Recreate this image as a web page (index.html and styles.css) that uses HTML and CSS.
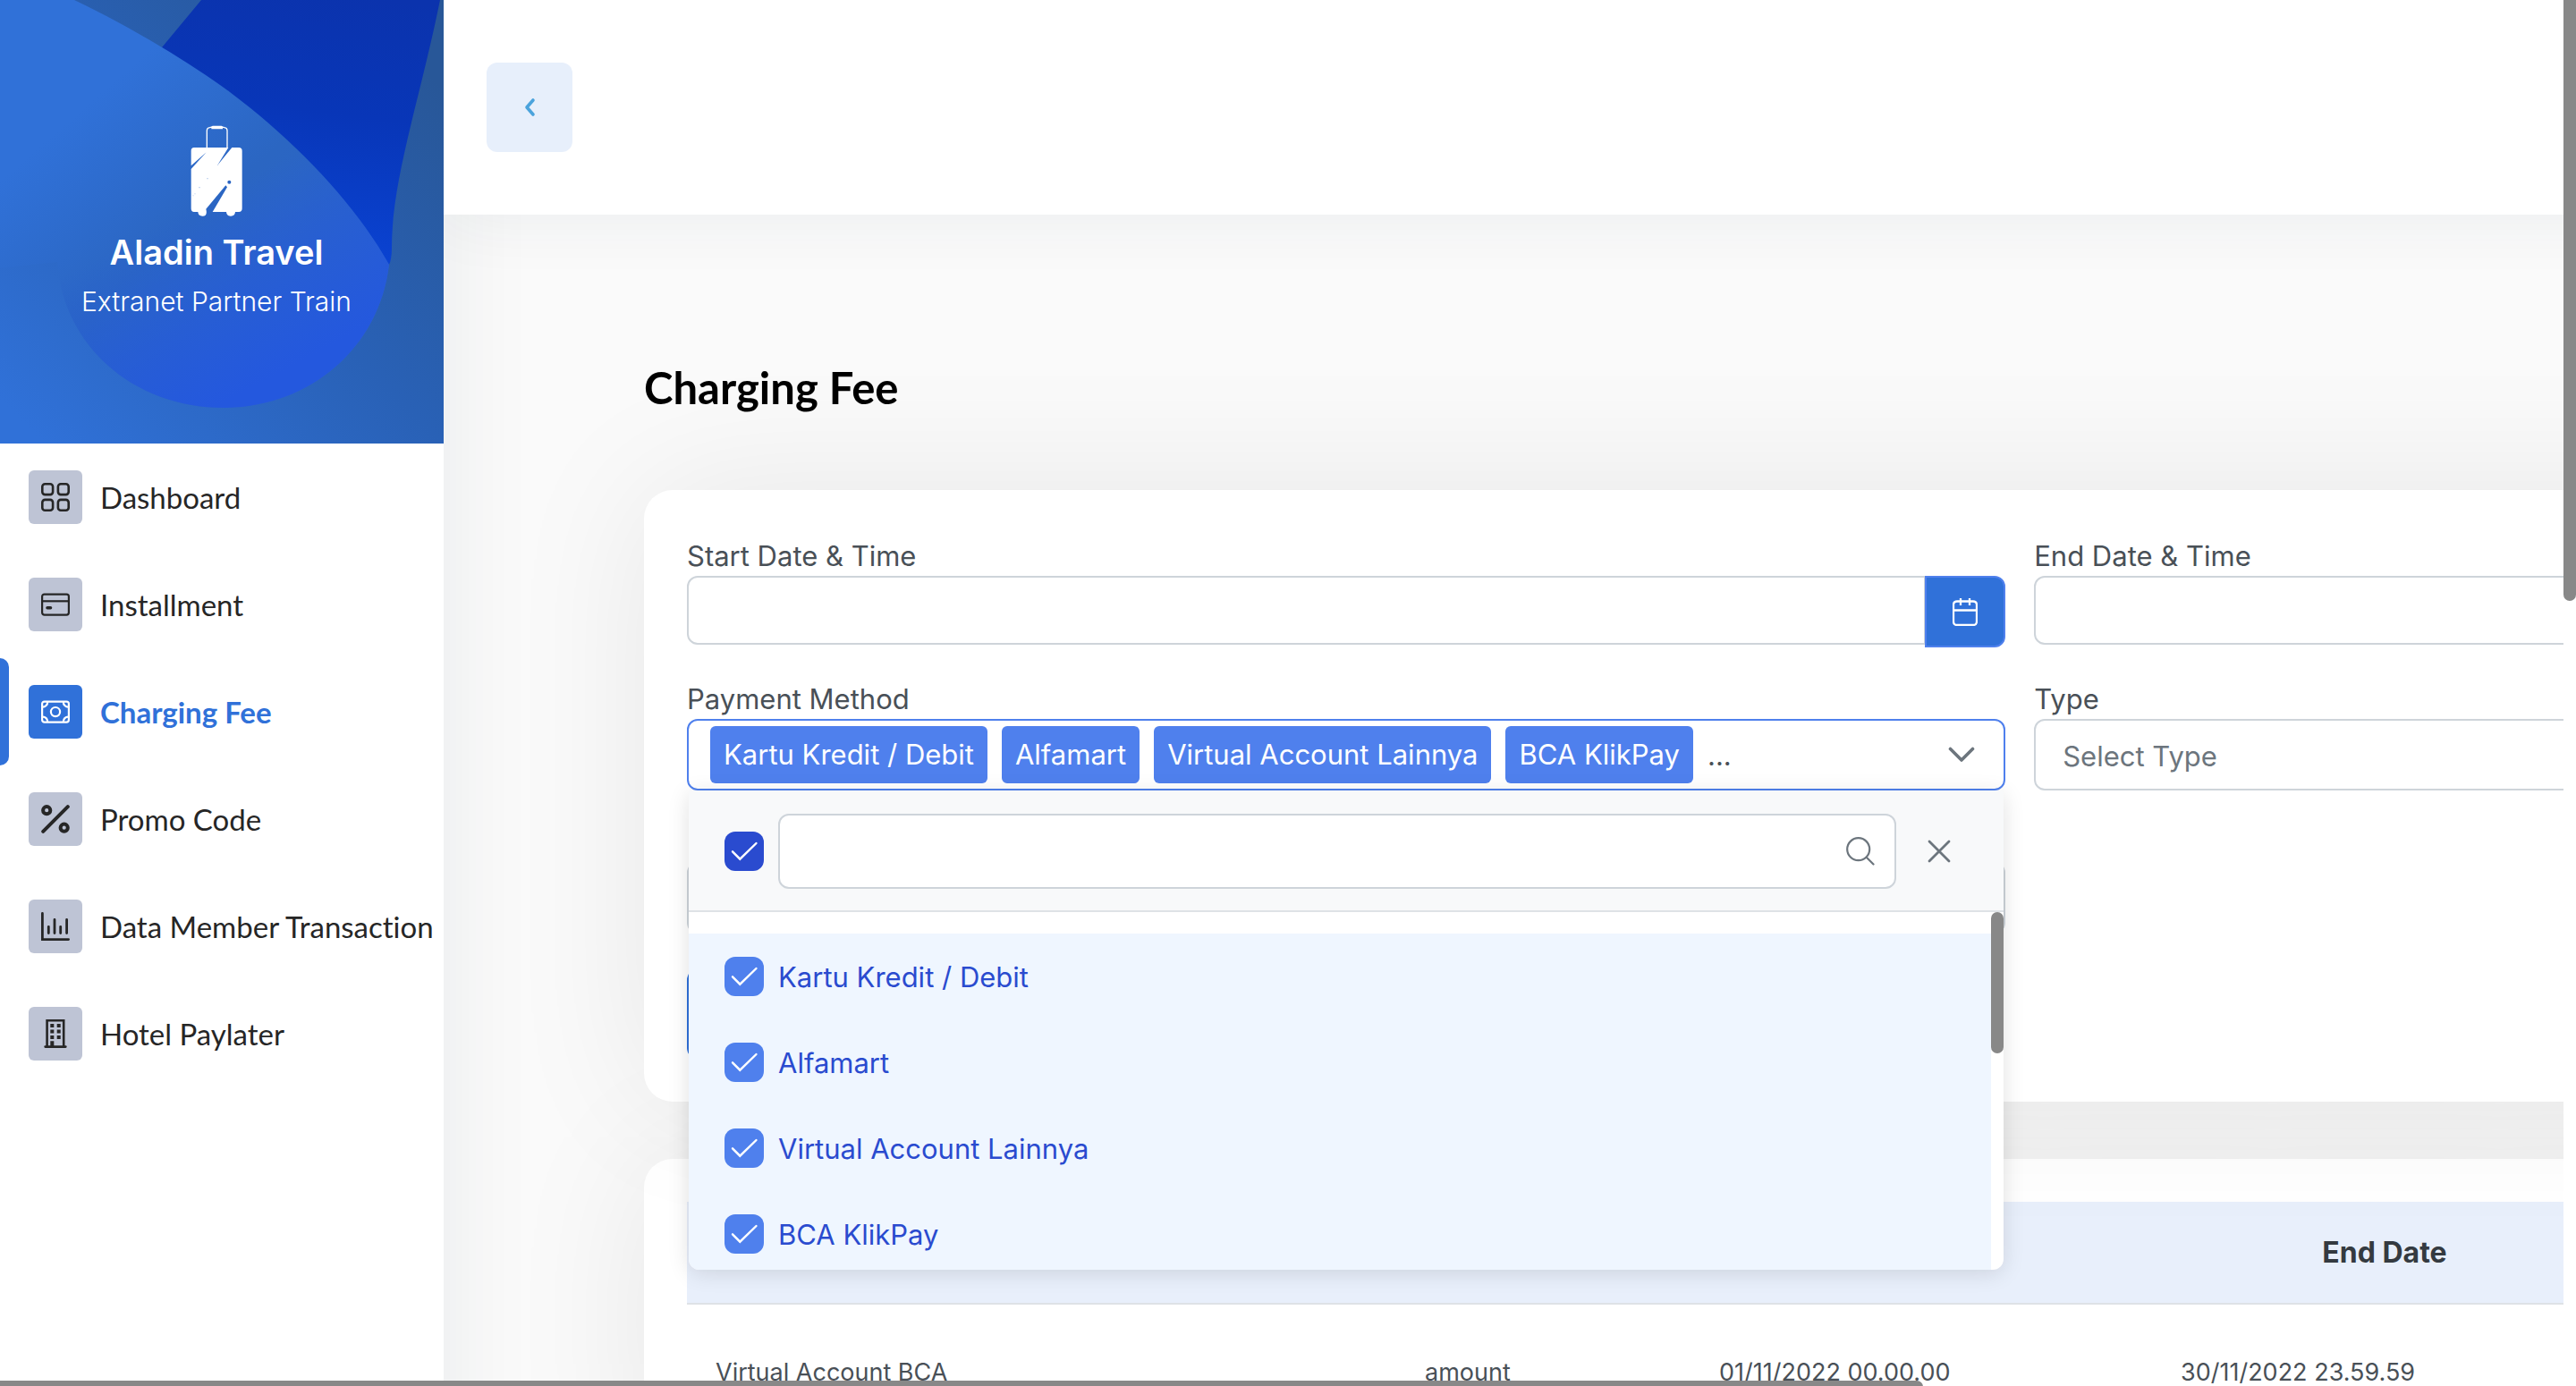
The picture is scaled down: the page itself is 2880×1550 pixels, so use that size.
FILE: index.html
```html
<!DOCTYPE html>
<html lang="id">
<head>
<meta charset="utf-8">
<title>Charging Fee - Aladin Travel</title>
<meta name="viewport" content="width=device-width, initial-scale=1">
<link rel="stylesheet" href="styles.css">
</head>
<body>
<svg class="sprite" aria-hidden="true">
  <symbol id="tick" viewBox="0 0 44 44"><path d="M9 22.300L17.300 30.700L35.500 13" fill="none" stroke="#fff" stroke-width="2.400" stroke-linecap="round"/></symbol>
</svg>
<div class="window">
  <div class="viewport">
    <div class="page">
      <aside class="sidebar">
        <div class="brand">
          <svg class="brand-art" viewBox="0 0 496 496" preserveAspectRatio="none" aria-hidden="true">
            <defs>
              <linearGradient id="base" x1="0" y1="1" x2="1" y2="0"><stop offset="0.05" stop-color="#3071d8"/><stop offset="0.5" stop-color="#2961b6"/><stop offset="0.900" stop-color="#285798"/></linearGradient>
              <linearGradient id="leaf" gradientUnits="userSpaceOnUse" x1="90" y1="60" x2="300" y2="300"><stop offset="0.150" stop-color="#3071d8"/><stop offset="0.700" stop-color="#2b66c2"/><stop offset="1" stop-color="#2b64c6"/></linearGradient>
              <linearGradient id="drop" gradientUnits="userSpaceOnUse" x1="180" y1="250" x2="290" y2="456"><stop offset="0" stop-color="#2458e0" stop-opacity="0"/><stop offset="0.900" stop-color="#2458de"/></linearGradient>
              <linearGradient id="deep" gradientUnits="userSpaceOnUse" x1="440" y1="0" x2="400" y2="296"><stop offset="0" stop-color="#0b33ad"/><stop offset="0.450" stop-color="#0836b8"/><stop offset="1" stop-color="#0a43d2"/></linearGradient>
            </defs>
            <rect width="496" height="496" fill="url(#base)"/>
            <path d="M225 0L181 53L300 200L435 296Q438 290 438 277C438 200 470 110 492 0Z" fill="url(#deep)"/>
            <path d="M0 0H83C150 32 215 72 257 103C330 158 395 225 435 296C424 390 345 456 250 456C148 456 70 385 64 293L0 300Z" fill="url(#leaf)"/>
            <path d="M64 293C70 385 148 456 250 456C345 456 424 390 435 296C395 225 330 158 257 103C170 150 64 200 64 293Z" fill="url(#drop)"/>
          </svg>
          <div class="brand-text">
            <svg class="suitcase" viewBox="400 32 174 306" aria-hidden="true">
              <path d="M455 108V50Q455 41 464 40L474 38H504L514 40Q523 41 523 50V108" fill="none" stroke="#fff" stroke-width="4"/>
              <path d="M474 34H504L508 37V45H470V37Z" fill="#fff"/>
              <path d="M412 107H527L490 167L539 107H562Q573 107 573 118V312Q573 323 562 323H550Q549 337 535 337Q521 337 520 323H474L523 240L518 234L452 313Q458 337 440 337Q426 337 425 323H412Q402 323 402 312V179L453 123L402 168V118Q402 107 412 107Z" fill="#fff"/>
              <circle cx="530" cy="223" r="6" fill="#2b65c2"/>
              <g fill="#9db9e6"><circle cx="457" cy="211" r="2"/><circle cx="430" cy="241" r="2"/><circle cx="415" cy="262" r="1.500"/><circle cx="409" cy="268" r="1.500"/></g>
            </svg>
            <strong class="brand-name">Aladin Travel</strong>
            <span class="brand-sub">Extranet Partner Train</span>
          </div>
        </div>
        <nav class="menu">
          <a class="menu-item" href="#dashboard"><span class="tile"><svg viewBox="0 0 32 32"><g fill="none" stroke="currentColor" stroke-width="2.600"><rect x="1.300" y="1.300" width="11.800" height="11.800" rx="3"/><rect x="18.900" y="1.300" width="11.800" height="11.800" rx="3"/><rect x="1.300" y="18.900" width="11.800" height="11.800" rx="3"/><rect x="18.900" y="18.900" width="11.800" height="11.800" rx="3"/></g></svg></span>Dashboard</a>
          <a class="menu-item" href="#installment"><span class="tile"><svg viewBox="0 0 32 32"><g fill="none" stroke="currentColor" stroke-width="2.200"><rect x="1.100" y="4.600" width="29.800" height="23" rx="2.500"/><path d="M1 12.300H31"/><path d="M7 19.700H10.500" stroke-width="3.600" stroke-linecap="round"/></g></svg></span>Installment</a>
          <a class="menu-item active" href="#charging-fee" aria-current="page"><span class="tile"><svg viewBox="0 0 32 32"><g fill="none" stroke="currentColor" stroke-width="2.200"><rect x="1.100" y="4.600" width="29.800" height="23" rx="2.500"/><circle cx="16" cy="16.100" r="5.100"/><path d="M7.200 5A5.400 5.400 0 0 1 1.500 10.600M24.800 5A5.400 5.400 0 0 0 30.500 10.600M7.200 27.200A5.400 5.400 0 0 0 1.500 21.600M24.800 27.200A5.400 5.400 0 0 1 30.500 21.600"/></g></svg></span>Charging Fee</a>
          <a class="menu-item" href="#promo-code"><span class="tile"><svg viewBox="0 0 32 32"><g fill="none" stroke="currentColor" stroke-width="4"><circle cx="6.200" cy="6.200" r="4.100"/><circle cx="25.700" cy="25.700" r="4.100"/><path d="M2.200 29.800L29.800 2.200" stroke-linecap="round"/></g></svg></span>Promo Code</a>
          <a class="menu-item" href="#data-member"><span class="tile"><svg viewBox="0 0 32 32"><path d="M1.400 1.400V30.600H30.600M8.300 16.300V23.600M15 8.500V23.600M21.700 16.300V23.600M28.600 8.500V23.600" fill="none" stroke="currentColor" stroke-width="2.800" stroke-linecap="round"/></svg></span>Data Member Transaction</a>
          <a class="menu-item" href="#hotel-paylater"><span class="tile"><svg viewBox="0 0 32 32"><path d="M6.600 30V1.300H25.200V30M4.600 30.600H27.400" fill="none" stroke="currentColor" stroke-width="2.600" stroke-linecap="round"/><path d="M10.300 5h4v4h-4zM17.700 5h4v4h-4zM10.300 11.500h4v4h-4zM17.700 11.500h4v4h-4zM10.300 18h4v4h-4zM17.700 18h4v4h-4zM10.300 24.300h4v6h-4z" fill="currentColor"/></svg></span>Hotel Paylater</a>
        </nav>
      </aside>

      <div class="workspace">
        <header class="topbar">
          <button class="collapse" type="button" aria-label="Collapse menu"><svg viewBox="0 0 14 22"><path d="M11 3L4 11L11 19" fill="none" stroke="currentColor" stroke-width="3.600" stroke-linecap="round" stroke-linejoin="round"/></svg></button>
        </header>
        <main class="content">
          <h1 class="title">Charging Fee</h1>

          <form class="card filters">
            <div class="field">
              <label for="start">Start Date &amp; Time</label>
              <div class="date-box">
                <input class="date-input" id="start" type="text">
                <button class="date-button" type="button" aria-label="Choose start date"><svg viewBox="0 0 28 32"><path d="M5 4.500H23Q27 4.500 27 8.500V27Q27 31 23 31H5Q1 31 1 27V8.500Q1 4.500 5 4.500ZM1 14.500H27M9 1V9M19 1V9" fill="none" stroke="currentColor" stroke-width="2.300"/></svg></button>
              </div>
            </div>
            <div class="field">
              <label for="end">End Date &amp; Time</label>
              <div class="date-box">
                <input class="date-input" id="end" type="text">
                <button class="date-button" type="button" aria-label="Choose end date"><svg viewBox="0 0 28 32"><path d="M5 4.500H23Q27 4.500 27 8.500V27Q27 31 23 31H5Q1 31 1 27V8.500Q1 4.500 5 4.500ZM1 14.500H27M9 1V9M19 1V9" fill="none" stroke="currentColor" stroke-width="2.300"/></svg></button>
              </div>
            </div>
            <div class="field">
              <span class="label" id="method-label">Payment Method</span>
              <div class="multi" role="group" aria-labelledby="method-label">
                <span class="tag">Kartu Kredit / Debit</span>
                <span class="tag">Alfamart</span>
                <span class="tag">Virtual Account Lainnya</span>
                <span class="tag">BCA KlikPay</span>
                <span class="more">...</span>
                <button class="toggle" type="button" aria-label="Close list" aria-expanded="true"><svg viewBox="0 0 30 18"><path d="M2.500 2.500L15 15L27.500 2.500" fill="none" stroke="currentColor" stroke-width="3.600" stroke-linecap="round" stroke-linejoin="round"/></svg></button>
                <div class="panel">
                  <div class="panel-head">
                    <span class="check all"><input type="checkbox" checked aria-label="Select all"><svg><use href="#tick"/></svg></span>
                    <div class="search">
                      <input type="text" aria-label="Search payment method">
                      <svg viewBox="0 0 32 32"><g fill="none" stroke="currentColor" stroke-width="2.200" stroke-linecap="round"><circle cx="13.700" cy="13.700" r="12.500"/><path d="M23 23L30.500 30.500"/></g></svg>
                    </div>
                    <button class="close" type="button" aria-label="Close"><svg viewBox="0 0 26 26"><path d="M2 2L24 24M24 2L2 24" stroke="currentColor" stroke-width="2.800" stroke-linecap="round"/></svg></button>
                  </div>
                  <div class="panel-body">
                    <div class="options">
                      <label class="option"><span class="check"><input type="checkbox" checked><svg><use href="#tick"/></svg></span><span class="option-text">Kartu Kredit / Debit</span></label>
                      <label class="option"><span class="check"><input type="checkbox" checked><svg><use href="#tick"/></svg></span><span class="option-text">Alfamart</span></label>
                      <label class="option"><span class="check"><input type="checkbox" checked><svg><use href="#tick"/></svg></span><span class="option-text">Virtual Account Lainnya</span></label>
                      <label class="option"><span class="check"><input type="checkbox" checked><svg><use href="#tick"/></svg></span><span class="option-text">BCA KlikPay</span></label>
                    </div>
                    <div class="options-track"><div class="options-thumb"></div></div>
                  </div>
                </div>
              </div>
            </div>
            <div class="field">
              <label for="type">Type</label>
              <select class="select" id="type"><option>Select Type</option></select>
            </div>
            <div class="actions">
              <input class="amount" type="text" aria-label="Amount">
              <button class="submit" type="submit" aria-label="Search"></button>
            </div>
          </form>

          <section class="card">
            <table class="table">
              <colgroup><col class="c-method"><col class="c-type"><col class="c-start"><col class="c-end"><col></colgroup>
              <thead><tr><th aria-label="Payment method"></th><th aria-label="Type"></th><th aria-label="Start date"></th><th>End Date</th><th aria-label="Action"></th></tr></thead>
              <tbody><tr><td>Virtual Account BCA</td><td>amount</td><td>01/11/2022 00.00.00</td><td>30/11/2022 23.59.59</td><td></td></tr></tbody>
            </table>
          </section>
        </main>
      </div>
    </div>
  </div>
  <div class="track-v"><div class="thumb-v"></div></div>
  <div class="track-h"><div class="thumb-h"></div></div>
</div>
</body>
</html>
```

FILE: styles.css
```css
* { box-sizing: border-box; }

body {
  margin: 0;
  background: #fff;
  color: #495057;
  font: 31px/48px Inter, "Liberation Sans", sans-serif;
}

button, input, select { font: inherit; color: inherit; margin: 0; }
button { cursor: pointer; padding: 0; border: 0; background: none; }
svg { display: block; }
.sprite { position: absolute; width: 0; height: 0; }

/* Scrolling window with slim custom bars */
.window {
  display: grid;
  grid-template-columns: minmax(0, 1fr) 14px;
  grid-template-rows: minmax(0, 1fr) 6px;
  height: 100vh;
  overflow: hidden;
}
.viewport {
  grid-row: 1 / 3;
  grid-column: 1;
  overflow: auto;
  scrollbar-width: none;
}
.thumb-v { height: 672px; background: #888; border-radius: 0 0 7px 7px; }
.track-v { grid-row: 1 / 3; grid-column: 2; }
.track-h { z-index: 4; grid-row: 2; grid-column: 1; overflow: hidden; }
.thumb-h { width: 75%; height: 14px; background: #888; border-radius: 0 7px 7px 0; }

.page {
  display: flex;
  width: 134%;
  min-height: 100%;
  background: #fafafa;
}

/* Sidebar */
.sidebar {
  position: relative;
  z-index: 1;
  flex: 0 0 496px;
  background: #fff;
  box-shadow: 0 0 100px rgba(30, 50, 70, 0.08);
}
.brand { display: grid; height: 496px; }
.brand-art, .brand-text { grid-area: 1 / 1; }
.brand-art { width: 100%; height: 100%; }
.brand-text {
  z-index: 1;
  display: flex;
  flex-direction: column;
  align-items: center;
  padding: 140px 12px 0 0;
  color: #fff;
}
.suitcase { width: 58px; height: 102px; }
.brand-name { margin-top: 16px; font-size: 38px; font-weight: 600; }
.brand-sub { margin-top: 7px; font-size: 30px; font-weight: 300; }

.menu-item {
  display: flex;
  align-items: center;
  gap: 20px;
  height: 120px;
  padding-left: 32px;
  color: #262626;
  font: 33px/44px Lato, "Open Sans", sans-serif;
  font-variant-ligatures: none;
  text-decoration: none;
  white-space: nowrap;
}
.tile {
  display: grid;
  place-items: center;
  width: 60px;
  height: 60px;
  border-radius: 6px;
  background: #bec4d5;
}
.tile svg { width: 32px; height: 32px; }
.active { position: relative; color: #3071d9; font-weight: 700; }
.active::before {
  content: "";
  position: absolute;
  inset: 0 auto 0 0;
  width: 10px;
  border-radius: 0 10px 10px 0;
  background: #3071d9;
}
.active .tile { background: #3071d9; color: #fff; }

/* Workspace */
.workspace { flex: 1; min-width: 0; }
.topbar {
  position: relative;
  z-index: 2;
  display: flex;
  align-items: center;
  height: 240px;
  padding-left: 48px;
  background: #fff;
  box-shadow: 0 0 80px rgba(30, 50, 70, 0.07);
  clip-path: inset(0 0 -120px 0);
}
.collapse {
  display: grid;
  place-items: center;
  width: 96px;
  height: 100px;
  border-radius: 12px;
  background: #e7effb;
  color: #4ba3dc;
}
.collapse svg { width: 14px; height: 22px; }
.content { padding: 160px 44px 48px 224px; }
.title {
  margin: 0 0 82px;
  color: #000;
  font: 700 49px/66px Lato, "Open Sans", sans-serif;
}

.card {
  padding: 48px;
  border-radius: 32px;
  background: #fff;
  box-shadow: 0 0 160px rgba(0, 0, 0, 0.08);
}
.card + .card { margin-top: 64px; }

/* Filter form */
.filters {
  position: relative;
  z-index: 1;
  display: grid;
  grid-template-columns: repeat(2, minmax(0, 1fr));
  gap: 32px;
}
.field > label, .label { display: block; padding-top: 4px; line-height: 44px; }
.date-box { display: flex; align-items: flex-start; height: 80px; }
.date-input, .amount, .search input, .select {
  border: 2px solid #ced4da;
  background: #fff;
  padding: 0 30px;
}
.date-input {
  flex: 1;
  min-width: 0;
  height: 77px;
  border-right-width: 1px;
  border-radius: 12px 0 0 12px;
}
.date-button {
  display: grid;
  place-items: center;
  width: 90px;
  height: 80px;
  border: 2px solid #4f80ed;
  border-radius: 0 12px 12px 0;
  background: #3071d9;
  color: #fff;
}
.date-button svg { width: 28px; height: 32px; }
.select {
  display: block;
  width: 100%;
  height: 80px;
  padding-top: 4px;
  border-radius: 12px;
  color: #6c757d;
  appearance: none;
}

.multi {
  position: relative;
  display: flex;
  align-items: center;
  gap: 16px;
  height: 80px;
  padding: 0 32px 0 24px;
  border: 2px solid #4f80ed;
  border-radius: 12px;
}
.tag {
  padding: 10px 15px;
  border-radius: 6px;
  background: #4f80ed;
  color: #fff;
  line-height: 44px;
  white-space: nowrap;
}
.more { padding-top: 2px; }
.toggle { margin-left: auto; color: #6c757d; }
.toggle svg { width: 30px; height: 18px; }

.panel {
  position: absolute;
  top: calc(100% + 2px);
  left: 0;
  right: 0;
  overflow: hidden;
  border-radius: 0 0 12px 12px;
  background: #fff;
  box-shadow: 0 4px 24px rgba(0, 0, 0, 0.12);
}
.multi:has(.panel) { z-index: 3; }
.panel-head {
  display: flex;
  align-items: center;
  gap: 16px;
  padding: 26px 40px 24px;
  border-bottom: 2px solid #dee2e6;
  background: #f8f9fa;
}
.check { display: grid; flex: none; }
.check > * { grid-area: 1 / 1; width: 44px; height: 44px; }
.check input {
  appearance: none;
  border-radius: 12px;
  background: #4f80ed;
}
.check svg { pointer-events: none; z-index: 1; }
.all input { background: #2a4bcf; }
.search { display: grid; flex: 1; align-items: center; }
.search > * { grid-area: 1 / 1; }
.search input { width: 100%; height: 84px; border-radius: 12px; }
.search svg {
  z-index: 1;
  justify-self: end;
  width: 32px;
  height: 32px;
  margin-right: 24px;
  color: #6c757d;
}
.close {
  display: grid;
  place-items: center;
  width: 64px;
  height: 64px;
  color: #6c757d;
}
.close svg { width: 26px; height: 26px; }
.panel-body {
  display: grid;
  grid-template-columns: minmax(0, 1fr) 14px;
  height: 400px;
  overflow: hidden;
}
.options { padding-top: 24px; }
.option {
  display: flex;
  align-items: center;
  gap: 16px;
  height: 96px;
  padding-left: 40px;
  background: #eff6ff;
  color: #2a4bcf;
}
.option-text { padding-top: 2px; }
.options-thumb { height: 158px; border-radius: 7px; background: #888; }

.actions {
  display: grid;
  gap: 40px;
  padding-top: 48px;
}
.amount { width: 100%; height: 80px; border-radius: 12px; }
.submit {
  width: 280px;
  height: 100px;
  border-radius: 12px;
  background: #3071d9;
}

/* Fee table */
.table {
  width: 100%;
  border-collapse: collapse;
  table-layout: fixed;
  text-align: left;
}
.c-method { width: 793px; }
.c-type { width: 329px; }
.c-start { width: 516px; }
.c-end { width: 520px; }
.table th {
  height: 114px;
  padding: 0 32px;
  border-bottom: 2px solid #dee2e6;
  background: #e8effb;
  color: #343a40;
  font-size: 32px;
  font-weight: 700;
  text-align: center;
}
.table td {
  padding: 60px 32px;
  font-size: 27px;
  line-height: 32px;
}
```
